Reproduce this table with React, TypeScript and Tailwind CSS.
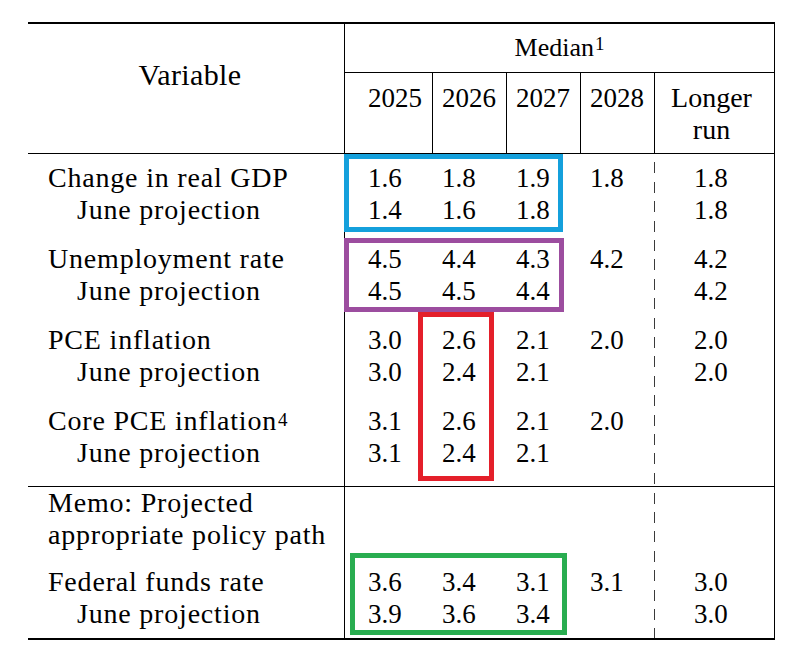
import React from "react";

type Row = { label: string; sup?: string; indent?: boolean; vals: string[]; lr: string };

const summary: Row[][] = [
  [
    { label: "Change in real GDP", vals: ["1.6", "1.8", "1.9", "1.8"], lr: "1.8" },
    { label: "June projection", indent: true, vals: ["1.4", "1.6", "1.8", ""], lr: "1.8" },
  ],
  [
    { label: "Unemployment rate", vals: ["4.5", "4.4", "4.3", "4.2"], lr: "4.2" },
    { label: "June projection", indent: true, vals: ["4.5", "4.5", "4.4", ""], lr: "4.2" },
  ],
  [
    { label: "PCE inflation", vals: ["3.0", "2.6", "2.1", "2.0"], lr: "2.0" },
    { label: "June projection", indent: true, vals: ["3.0", "2.4", "2.1", ""], lr: "2.0" },
  ],
  [
    { label: "Core PCE inflation", sup: "4", vals: ["3.1", "2.6", "2.1", "2.0"], lr: "" },
    { label: "June projection", indent: true, vals: ["3.1", "2.4", "2.1", ""], lr: "" },
  ],
];

const memo: Row[][] = [
  [
    { label: "Memo: Projected", vals: [], lr: "" },
    { label: "appropriate policy path", vals: [], lr: "" },
  ],
  [
    { label: "Federal funds rate", vals: ["3.6", "3.4", "3.1", "3.1"], lr: "3.0" },
    { label: "June projection", indent: true, vals: ["3.9", "3.6", "3.4", ""], lr: "3.0" },
  ],
];

function Section({ groups, pad, dash, border }: { groups: Row[][]; pad: string; dash: string; border: string }) {
  return (
    <div className={`flex ${border}`}>
      {/* labels */}
      <div className={`w-[317px] shrink-0 border-r border-black flex flex-col ${pad}`}>
        {groups.map((g, i) => (
          <div key={i}>
            {g.map((r, j) => (
              <div
                key={j}
                className={`h-[32px] leading-[32px] text-[28px] tracking-[0.8px] whitespace-nowrap ${r.indent ? "pl-[49px]" : "pl-[20px]"}`}
              >
                {r.label}
                {r.sup && <sup className="text-[19px] top-[-4px] ml-[1px] tracking-normal">{r.sup}</sup>}
              </div>
            ))}
          </div>
        ))}
      </div>

      {/* 2025-2028 */}
      <div className={`w-[309px] shrink-0 flex flex-col ${pad}`}>
        {groups.map((g, i) => (
          <div key={i}>
            {g.map((r, j) => (
              <div key={j} className="grid grid-cols-[88px_74px_74px_73px] h-[32px] leading-[32px] text-[27px]">
                {[0, 1, 2, 3].map((k) => (
                  <div key={k} className={k === 0 ? "pl-[23px]" : "pl-[9px]"}>
                    {r.vals[k] ?? ""}
                  </div>
                ))}
              </div>
            ))}
          </div>
        ))}
      </div>

      <div className={`w-px shrink-0 ${dash}`} />

      {/* longer run */}
      <div className={`flex-1 flex flex-col ${pad}`}>
        {groups.map((g, i) => (
          <div key={i}>
            {g.map((r, j) => (
              <div key={j} className="h-[32px] leading-[32px] text-[27px] pl-[39px]">
                {r.lr}
              </div>
            ))}
          </div>
        ))}
      </div>
    </div>
  );
}

export default function App() {
  return (
    <div className="w-[798px] h-[669px] bg-white pt-[22px] pl-[28px] text-black [font-family:'Liberation_Serif','Times_New_Roman','DejaVu_Serif',serif]">
      <div className="relative w-[747px] border-r border-black">
        <div className="h-[2px] bg-black" />

        {/* header */}
        <div className="flex border-b border-black">
          <div className="w-[317px] shrink-0 border-r border-black pt-[35px] pl-[8px] text-center text-[30px] leading-[32px] tracking-[0.4px]">
            Variable
          </div>
          <div className="flex-1 flex flex-col">
            <div className="h-[49px] border-b border-black flex items-center justify-center text-[26px] leading-[32px]">
              Median<sup className="text-[19px] top-[-4px] ml-[1px]">1</sup>
            </div>
            <div className="flex h-[80px] text-[27px] leading-[32px]">
              <div className="w-[88px] shrink-0 border-r border-black pl-[23px] pt-[9px]">2025</div>
              <div className="w-[74px] shrink-0 border-r border-black pl-[9px] pt-[9px]">2026</div>
              <div className="w-[74px] shrink-0 border-r border-black pl-[9px] pt-[9px]">2027</div>
              <div className="w-[74px] shrink-0 border-r border-black pl-[9px] pt-[9px]">2028</div>
              <div className="flex-1 text-center pr-[6px] pt-[9px] text-[28px]">
                Longer
                <br />
                run
              </div>
            </div>
          </div>
        </div>

        <Section
          groups={summary}
          pad="pt-[8px] pb-[17px] gap-[17px]"
          border="border-b border-black"
          dash="bg-[repeating-linear-gradient(to_bottom,transparent_0_8.4px,#3a3a3a_8.4px_19.4px)]"
        />
        <Section
          groups={memo}
          pad="pt-0 pb-[8px] gap-[15px]"
          border=""
          dash="bg-[repeating-linear-gradient(to_bottom,transparent_0_5.5px,#3a3a3a_5.5px_16.5px,transparent_16.5px_19.4px)]"
        />

        <div className="h-[2px] bg-black" />

        {/* highlight boxes */}
        <div className="absolute left-[316px] top-[132px] w-[219px] h-[78px] border-[5px] border-[#14a0dc]" />
        <div className="absolute left-[316px] top-[216px] w-[220px] h-[74px] border-[5px] border-[#9c4d9f]" />
        <div className="absolute left-[390px] top-[290px] w-[76px] h-[169px] border-[5px] border-[#e41f2a]" />
        <div className="absolute left-[322px] top-[531px] w-[217px] h-[82px] border-[5px] border-[#29ad50]" />
      </div>
    </div>
  );
}
